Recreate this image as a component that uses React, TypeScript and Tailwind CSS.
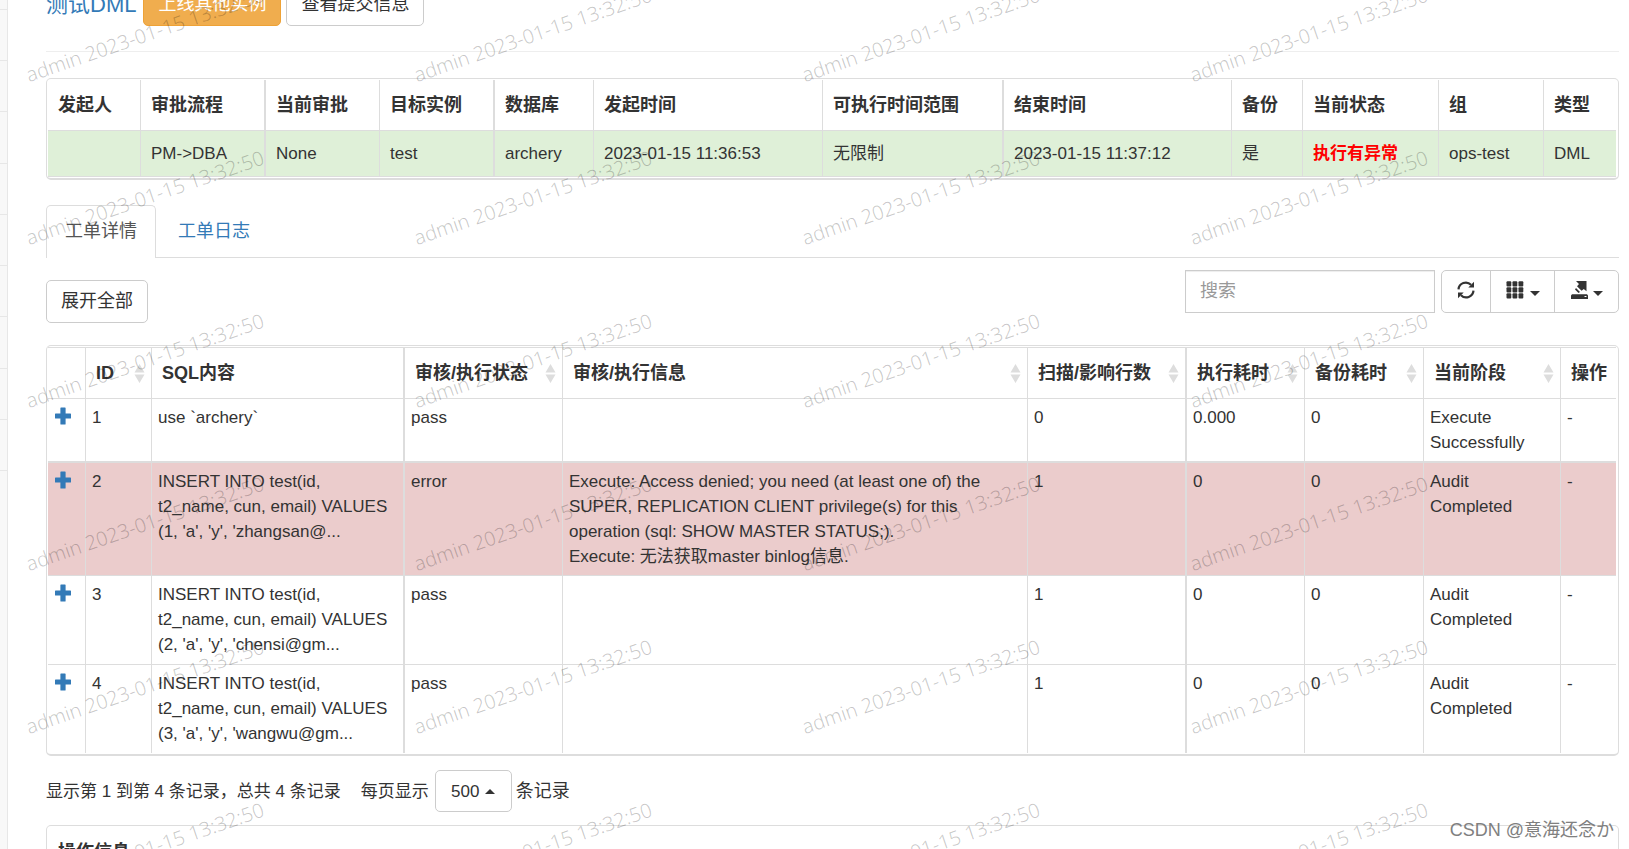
import { Fragment, type ReactNode } from "react";

const WATERMARK = "admin 2023-01-15 13:32:50";

const infoColumns = [
  { label: "发起人", width: "w-[92px]", value: "" },
  { label: "审批流程", width: "w-[124px]", value: "PM->DBA" },
  { label: "当前审批", width: "w-[115px]", value: "None", thick: true },
  { label: "目标实例", width: "w-[114px]", value: "test" },
  { label: "数据库", width: "w-[100px]", value: "archery", thick: true },
  { label: "发起时间", width: "w-[229px]", value: "2023-01-15 11:36:53" },
  { label: "可执行时间范围", width: "w-[180px]", value: "无限制" },
  { label: "结束时间", width: "w-[229px]", value: "2023-01-15 11:37:12", thick: true },
  { label: "备份", width: "w-[71px]", value: "是" },
  { label: "当前状态", width: "w-[136px]", value: "执行有异常", danger: true },
  { label: "组", width: "w-[105px]", value: "ops-test" },
  { label: "类型", width: "w-[73px]", value: "DML" },
];

const detailColumns = [
  { label: "", width: "w-[37px]" },
  { label: "ID", width: "w-[66px]", sortable: true },
  { label: "SQL内容", width: "w-[252px]" },
  { label: "审核/执行状态", width: "w-[159px]", sortable: true, thick: true },
  { label: "审核/执行信息", width: "w-[465px]", sortable: true },
  { label: "扫描/影响行数", width: "w-[158px]", sortable: true },
  { label: "执行耗时", width: "w-[119px]", sortable: true, thick: true },
  { label: "备份耗时", width: "w-[119px]", sortable: true },
  { label: "当前阶段", width: "w-[137px]", sortable: true },
  { label: "操作", width: "w-[56px]" },
];

const rows = [
  {
    className: "h-[64px]",
    border: "border-b-2",
    cells: [["1"], ["use `archery`"], ["pass"], [], ["0"], ["0.000"], ["0"], ["Execute", "Successfully"], ["-"]],
  },
  {
    className: "h-[113px] bg-[#ebcccc]",
    border: "border-b",
    cells: [
      ["2"],
      ["INSERT INTO test(id,", "t2_name, cun, email) VALUES", "(1, 'a', 'y', 'zhangsan@..."],
      ["error"],
      [
        "Execute: Access denied; you need (at least one of) the",
        "SUPER, REPLICATION CLIENT privilege(s) for this",
        "operation (sql: SHOW MASTER STATUS;).",
        "Execute: 无法获取master binlog信息.",
      ],
      ["1"],
      ["0"],
      ["0"],
      ["Audit", "Completed"],
      ["-"],
    ],
  },
  {
    className: "h-[89px]",
    border: "border-b",
    cells: [
      ["3"],
      ["INSERT INTO test(id,", "t2_name, cun, email) VALUES", "(2, 'a', 'y', 'chensi@gm..."],
      ["pass"],
      [],
      ["1"],
      ["0"],
      ["0"],
      ["Audit", "Completed"],
      ["-"],
    ],
  },
  {
    className: "h-[88px]",
    border: "",
    cells: [
      ["4"],
      ["INSERT INTO test(id,", "t2_name, cun, email) VALUES", "(3, 'a', 'y', 'wangwu@gm..."],
      ["pass"],
      [],
      ["1"],
      ["0"],
      ["0"],
      ["Audit", "Completed"],
      ["-"],
    ],
  },
];

function cellBorder(index: number, thick?: boolean) {
  if (index === 0) return "";
  return thick ? "border-l-2" : "border-l";
}

function Caret({ up = false }: { up?: boolean }) {
  return (
    <svg width="10" height="5" viewBox="0 0 10 5" fill="currentColor" aria-hidden="true">
      <path d={up ? "M0 5L5 0L10 5Z" : "M0 0L5 5L10 0Z"} />
    </svg>
  );
}

function SortIcon() {
  return (
    <svg width="11" height="19" viewBox="0 0 11 19" fill="#ddd" className="shrink-0" aria-hidden="true">
      <path d="M5.5 0L10.500 8.500H.5ZM.5 10.500H10.500L5.500 19Z" />
    </svg>
  );
}

function PlusIcon() {
  return (
    <svg width="16" height="18" viewBox="0 0 16 18" fill="currentColor" aria-hidden="true">
      <path d="M6 .5h4a.6.6 0 0 1 .6.6v5.400h4.800a.6.6 0 0 1 .6.6v3.800a.6.6 0 0 1-.6.6h-4.800v5.400a.6.6 0 0 1-.6.6h-4a.6.6 0 0 1-.6-.6v-5.400h-4.800a.6.6 0 0 1-.6-.6v-3.800a.6.6 0 0 1 .6-.6h4.800v-5.400a.6.6 0 0 1 .6-.6z" />
    </svg>
  );
}

function RefreshIcon() {
  return (
    <svg width="18" height="18" viewBox="0 0 18 18" aria-hidden="true">
      <g fill="none" stroke="currentColor" strokeWidth="2.200">
        <path d="M1.500 8.300A7.300 7.300 0 0 1 14 3.800" />
        <path d="M16.500 9.700A7.300 7.300 0 0 1 4 14.200" />
      </g>
      <path d="M17 .8V6.500H11.300ZM1 17.200V11.500H6.700Z" fill="currentColor" />
    </svg>
  );
}

function GridIcon() {
  return (
    <svg width="18" height="18" viewBox="0 0 18 18" fill="currentColor" aria-hidden="true">
      {[0, 6, 12].map((y) =>
        [0, 6, 12].map((x) => <rect key={`${x}-${y}`} x={x + 0.5} y={y + 0.3} width="4.800" height="5.300" rx="1" />),
      )}
    </svg>
  );
}

function ExportIcon() {
  return (
    <svg width="18" height="18" viewBox="0 0 18 18" fill="currentColor" aria-hidden="true">
      <path d="M5 0H15.500V10.300L12.800 8L10.600 9.800L6 5.200L8 3Z" />
      <path d="M5 7L9 11L7.500 12L4 8.500Z" />
      <path d="M1 13.200H16L17 14.500V18H0V14.500ZM13.500 15V16H15.500V15Z" fillRule="evenodd" />
    </svg>
  );
}

function Panel({ children }: { children: ReactNode }) {
  return <div className="rounded-[5px] border border-b-2 border-[#ddd] pl-px pr-0.5">{children}</div>;
}

function InfoTable() {
  return (
    <Panel>
      <table className="mb-px mt-px w-full table-fixed border-separate border-spacing-0 text-left">
        <colgroup>
          {infoColumns.map((c) => (
            <col key={c.label} className={c.width} />
          ))}
        </colgroup>
        <thead>
          <tr className="h-[51px] text-[18px] leading-[25px]">
            {infoColumns.map((c, i) => (
              <th key={c.label} className={`whitespace-nowrap border-b border-[#ddd] px-2.5 ${cellBorder(i, c.thick)}`}>
                {c.label}
              </th>
            ))}
          </tr>
        </thead>
        <tbody>
          <tr className="h-[46px] bg-[#dff0d8]">
            {infoColumns.map((c, i) => (
              <td key={c.label} className={`whitespace-nowrap border-b border-[#ddd] px-2.5 ${cellBorder(i, c.thick)}`}>
                {c.danger ? <b className="text-[#f00]">{c.value}</b> : c.value}
              </td>
            ))}
          </tr>
        </tbody>
      </table>
    </Panel>
  );
}

function DetailTable() {
  return (
    <Panel>
      <table className="mb-px mt-px w-full table-fixed border-separate border-spacing-0 text-left">
        <colgroup>
          {detailColumns.map((c) => (
            <col key={c.label} className={c.width} />
          ))}
        </colgroup>
        <thead>
          <tr className="h-[52px] text-[18px] leading-[25px]">
            {detailColumns.map((c, i) => (
              <th
                key={c.label}
                className={`whitespace-nowrap border-b border-t border-[#ddd] pl-2.5 pr-1.5 ${cellBorder(i, c.thick)}`}
              >
                <div className="flex items-center justify-between">
                  {c.label}
                  {c.sortable && <SortIcon />}
                </div>
              </th>
            ))}
          </tr>
        </thead>
        <tbody>
          {rows.map((row) => (
            <tr key={row.cells[0][0]} className={`align-top ${row.className}`}>
              <td className={`border-[#ddd] px-[7px] py-2 ${row.border}`}>
                <a href="#detail" aria-label="展开" className="block text-[#337ab7]">
                  <PlusIcon />
                </a>
              </td>
              {row.cells.map((lines, i) => (
                <td
                  key={i}
                  className={`whitespace-nowrap border-[#ddd] px-1.5 py-1.5 ${row.border} ${cellBorder(i + 1, detailColumns[i + 1].thick)}`}
                >
                  {lines.map((line, n) => (
                    <Fragment key={line}>
                      {n > 0 && <br />}
                      {line}
                    </Fragment>
                  ))}
                </td>
              ))}
            </tr>
          ))}
        </tbody>
      </table>
    </Panel>
  );
}

function Toolbar() {
  return (
    <div className="flex items-start justify-between pt-3">
      <button type="button" className="mt-2.5 h-[43px] rounded-[5px] border border-[#ccc] px-[14px] text-[18px]">
        展开全部
      </button>
      <div className="flex gap-1.5">
        <input
          type="text"
          aria-label="搜索"
          placeholder="搜索"
          className="h-[43px] w-[250px] border border-[#ccc] px-[14px] text-[18px] shadow-[inset_0_1px_1px_rgba(0,0,0,0.075)] placeholder:text-[#999]"
        />
        <div className="flex h-[43px] divide-x divide-[#ccc] rounded-[5px] border border-[#ccc]">
          <button type="button" aria-label="刷新" className="flex w-[49px] justify-center pt-2.5">
            <RefreshIcon />
          </button>
          <button type="button" aria-label="列" className="flex w-[64px] justify-center gap-1.5 pt-2.5">
            <GridIcon />
            <span className="pt-2.5">
              <Caret />
            </span>
          </button>
          <button type="button" aria-label="导出" className="flex w-[63px] justify-center gap-1 pt-2.5">
            <ExportIcon />
            <span className="pt-2.5">
              <Caret />
            </span>
          </button>
        </div>
      </div>
    </div>
  );
}

function Watermarks() {
  return (
    <div className="pointer-events-none absolute inset-0 select-none overflow-hidden" aria-hidden="true">
      <div className="-mt-[78px] ml-[30px] grid auto-rows-[163px] grid-cols-[repeat(4,388px)] items-end">
        {Array.from({ length: 24 }, (_, i) => (
          <span
            key={i}
            className="origin-bottom-left -rotate-19 whitespace-nowrap font-['Noto_Sans'] text-[20px] font-light leading-[20px] text-black/22"
          >
            {WATERMARK}
          </span>
        ))}
      </div>
    </div>
  );
}

export default function App() {
  return (
    <div className="relative flex h-screen overflow-hidden bg-white font-['Liberation_Sans','Noto_Sans_CJK_SC',sans-serif] text-[17px] leading-[25px] text-[#333]">
      <aside className="w-2 shrink-0 border-r border-[#e7e7e7] bg-[#f8f8f8]">
        <div className="h-[10px] border-b border-[#e7e7e7]" />
        {Array.from({ length: 9 }, (_, i) => (
          <div key={i} className="h-[51px] border-b border-[#e7e7e7] nth-[4n]:h-[52px]" />
        ))}
      </aside>

      <main className="min-w-0 flex-1 pl-[38px] pr-2.5">
        <div className="-mt-[17px] flex items-center border-b border-[#eee] pb-[25px]">
          <a href="#workflow" className="mr-[7px] text-[22px] text-[#337ab7]">
            测试DML
          </a>
          <button
            type="button"
            className="mr-[5px] h-[43px] rounded-[5px] border border-[#eea236] bg-[#f0ad4e] px-[14px] text-[18px] text-white"
          >
            上线其他实例
          </button>
          <button type="button" className="h-[43px] rounded-[5px] border border-[#ccc] px-[14px] text-[18px]">
            查看提交信息
          </button>
        </div>

        <div className="mt-[26px]">
          <InfoTable />
        </div>

        <nav className="mt-[25px] flex border-b border-[#ddd] text-[18px]">
          <a
            href="#detail"
            className="-mb-px h-[53px] rounded-t-[5px] border border-b-0 border-[#ddd] bg-white px-[18px] pt-[13px] text-[#555]"
          >
            工单详情
          </a>
          <a href="#log" className="ml-1 px-[18px] pt-[14px] text-[#337ab7]">
            工单日志
          </a>
        </nav>

        <Toolbar />

        <div className="mt-[22px]">
          <DetailTable />
        </div>

        <div className="mt-3.5 flex items-center">
          <span className="mr-5">显示第 1 到第 4 条记录，总共 4 条记录</span>
          <span className="mr-1.5">每页显示</span>
          <button
            type="button"
            className="mr-1 flex h-[42px] w-[77px] items-center justify-center gap-1.5 rounded-[5px] border border-[#ccc]"
          >
            500
            <Caret up />
          </button>
          <span className="text-[18px]">条记录</span>
        </div>

        <div className="mt-[13px]">
          <Panel>
            <h2 className="px-2.5 py-3.5 text-[18px] font-bold">操作信息</h2>
          </Panel>
        </div>
      </main>

      <Watermarks />
      <span className="absolute bottom-1.5 right-[15px] font-['Liberation_Sans','Noto_Sans_CJK_JP',sans-serif] text-[18px] text-[#808080]">
        CSDN @意海还念か
      </span>
    </div>
  );
}
